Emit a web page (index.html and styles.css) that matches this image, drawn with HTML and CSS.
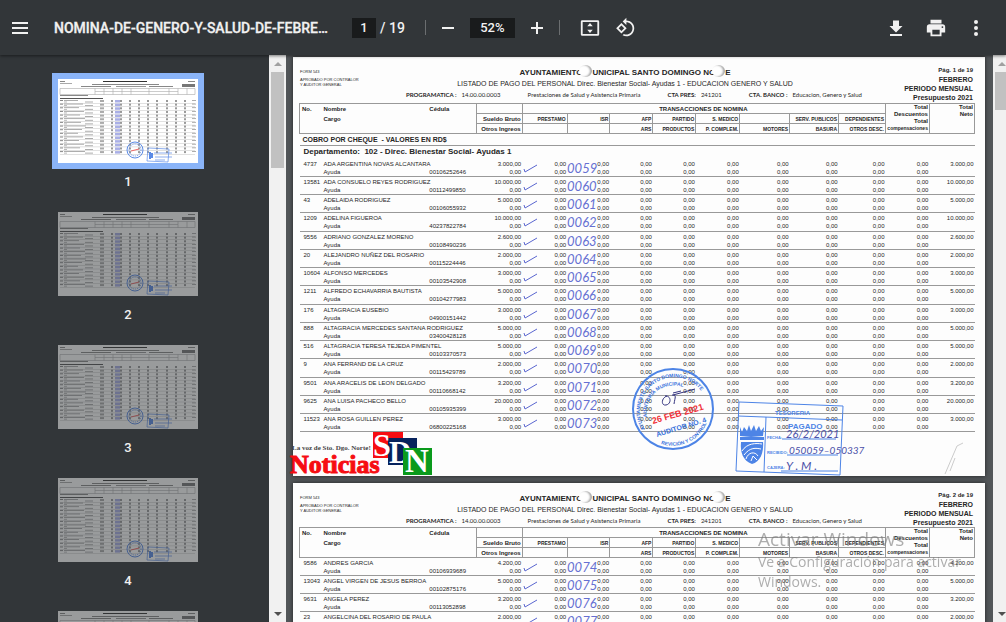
FILE: index.html
```html
<!DOCTYPE html>
<html lang="es">
<head>
<meta charset="utf-8">
<title>NOMINA-DE-GENERO-Y-SALUD-DE-FEBRERO</title>
<link rel="stylesheet" href="styles.css">
</head>
<body>
<header class="toolbar">
  <button class="icon-button" aria-label="Menú"><svg width="24" height="24" viewBox="0 0 24 24"><path d="M4 6h16v2H4zM4 11h16v2H4zM4 16h16v2H4z"/></svg></button>
  <h1 class="file-name">NOMINA-DE-GENERO-Y-SALUD-DE-FEBRE…</h1>
  <div class="page-nav">
    <input class="field page-field" aria-label="Página" value="1">
    <span>/ 19</span>
  </div>
  <span class="divider"></span>
  <button class="icon-button zoom-button" aria-label="Alejar"><svg width="24" height="24" viewBox="0 0 24 24"><path d="M6 11h12v2H6z"/></svg></button>
  <input class="field zoom-field" aria-label="Zoom" value="52%">
  <button class="icon-button zoom-button" aria-label="Acercar"><svg width="24" height="24" viewBox="0 0 24 24"><path d="M18 13h-5v5h-2v-5H6v-2h5V6h2v5h5z"/></svg></button>
  <span class="divider"></span>
  <button class="icon-button fit-button" aria-label="Ajustar a la página"><svg width="22" height="22" viewBox="0 0 24 24"><path fill-rule="evenodd" d="M3.500 3.500h17a1.500 1.500 0 0 1 1.500 1.500v14a1.500 1.500 0 0 1-1.500 1.500h-17A1.500 1.500 0 0 1 2 19V5a1.500 1.500 0 0 1 1.500-1.500zM4 5.500v13h16v-13zM12 6.500l3 3.500H9zM12 17.500l-3-3.500h6z"/></svg></button>
  <button class="icon-button" aria-label="Girar"><svg width="21" height="21" viewBox="0 0 24 24"><path fill-rule="evenodd" d="M7.340 6.900L1.340 12.900l6 6 6-6zM4.190 12.900l3.150-3.150 3.160 3.150-3.160 3.150z"/><path d="M19.360 6.640C17.610 4.880 15.300 4 13 4V.760L8.760 5 13 9.240V6c1.790 0 3.580.680 4.950 2.050 2.730 2.730 2.730 7.170 0 9.900C16.580 19.320 14.790 20 13 20c-.970 0-1.940-.210-2.840-.610l-1.490 1.490C10.020 21.620 11.510 22 13 22c2.300 0 4.610-.880 6.360-2.640 3.520-3.510 3.520-9.210 0-12.720z"/></svg></button>
  <div class="actions">
    <button class="icon-button" aria-label="Descargar"><svg width="24" height="24" viewBox="0 0 24 24"><path d="M18.500 10H15V4.500H9V10H5.500l6.500 6.500zM6 18v2h12v-2z"/></svg></button>
    <button class="icon-button" aria-label="Imprimir"><svg width="22" height="22" viewBox="0 0 24 24"><path fill-rule="evenodd" d="M19 8H5a3 3 0 0 0-3 3v6h4v4h12v-4h4v-6a3 3 0 0 0-3-3zm-3 11H8v-5h8zm3-7a1 1 0 1 1 0-2 1 1 0 0 1 0 2zM18 3H6v4h12z"/></svg></button>
    <button class="icon-button" aria-label="Más acciones"><svg width="24" height="24" viewBox="0 0 24 24"><circle cx="12" cy="6" r="2"/><circle cx="12" cy="12" r="2"/><circle cx="12" cy="18" r="2"/></svg></button>
  </div>
</header>

<main class="workspace">
  <nav class="sidebar" aria-label="Miniaturas">
    <div class="thumbs" id="thumbs"></div>
    <div class="scrollbar"><i class="arrow up"></i><div class="thumb tall"></div><i class="arrow down"></i></div>
  </nav>
  <section class="viewer">
    <div class="papers" id="papers"></div>
    <div class="scrollbar clipped"><i class="arrow up"></i><div class="thumb"></div><i class="arrow down"></i></div>
  </section>
</main>

<template id="overlays">
  <div class="logo">
    <span class="slogan">La voz de Sto. Dgo. Norte!</span>
    <span class="brand">Noticias</span>
    <svg class="squares" width="60" height="43" viewBox="0 0 60 43">
      <rect width="30" height="26" fill="#f60d12"/>
      <rect x="15" y="6" width="29" height="27" fill="#06225c"/>
      <text x="0" y="24" font-size="32">S</text><text x="16" y="31" font-size="31">D</text>
      <rect x="30" y="16" width="29" height="27" fill="#0a9a1c"/><text x="32" y="40" font-size="33">N</text>
    </svg>
  </div>
  <svg class="round-stamp" width="84" height="84" viewBox="0 0 84 84">
    <defs>
      <path id="arc-outer" d="M14 62A34 34 0 1 1 76 36"/>
      <path id="arc-inner" d="M16 50A27 27 0 0 1 66 32"/>
      <path id="arc-low" d="M30 77A37 37 0 0 0 78 48"/>
    </defs>
    <circle cx="42" cy="42" r="40" fill="none" stroke="#4d84e6" stroke-width="2"/>
    <g fill="#3872dc" font-weight="700" font-size="5">
      <text><textPath href="#arc-outer">AYUNTAMIENTO SANTO DOMINGO NORTE</textPath></text>
      <text><textPath href="#arc-inner">AUDITORÍA MUNICIPAL</textPath></text>
      <text><textPath href="#arc-low">REVICIÓN Y CONTROL</textPath></text>
      <text font-size="7" transform="rotate(-17 26 70)" x="26" y="70">AUDITOR NO. 4</text>
    </g>
    <text x="22" y="57" transform="rotate(-16 22 57)" fill="#f03238" font-size="9" font-weight="700">26 FEB 2021</text>
    <path d="M36 29c-6 2-6 10-1 9 6-1 5-10-1-9M41 28c5 0 3 2 2 9M42 28l22-6M42 26l8-2" fill="none" stroke="#33337f"/>
  </svg>
  <svg class="square-stamp" width="132" height="78" viewBox="0 0 132 78">
    <g fill="none" stroke="#4d84e6">
      <path d="M5 2l104 4-3 69-104-4zM4 16l104 4M32 17l-2 55M48 39h54M53 55h51M47 71h57"/>
    </g>
    <g fill="#4d84e6">
      <path d="M6 27l2 5 2-5 3 4 2-6 2 6 3-6 2 6 3-5 2 5 3-4-1 9-12 1-11-1z"/>
      <path d="M6 37h24v3H6zM7 42h22c1 11-3 20-11 22C9 61 6 52 7 42z"/>
      <g font-weight="700"><text x="41" y="15" font-size="6">TESORERIA</text><text x="54" y="29" font-size="8">PAGADO</text>
      <text x="33" y="39" font-size="4">FECHA:</text><text x="33" y="54" font-size="4">RECIBIDO:</text><text x="33" y="69" font-size="4">CAJERA:</text></g>
    </g>
    <path d="M8 51c5-8 14-8 20-7M10 55c6-8 12-7 17-6M12 59c2-7 9-8 12-3M17 61l2-5 4 4" fill="none" stroke="#fff"/>
    <g class="pen"><text x="52" y="38" font-size="11">26/2/2021</text><text x="55" y="54" font-size="10">050059–050337</text><text x="52" y="70" font-size="12">Y . M .</text></g>
  </svg>
  <svg class="crease" width="32" height="34" viewBox="0 0 32 34"><path d="M2 32L14 4l6-3M7 29l5-13" fill="none" stroke="#ccc"/></svg>
</template>

<aside class="watermark"><p class="watermark-title">Activar Windows</p><p>Ve a Configuración para activar</p><p>Windows.</p></aside>
<script src="main.js"></script>
</body>
</html>
```
FILE: styles.css
```css
* { box-sizing: border-box; }
body {
  margin: 0; height: 100vh; overflow: hidden; display: flex; flex-direction: column;
  background: #525659; font-family: "Liberation Sans", Arial, sans-serif;
}
.toolbar {
  flex: none; height: 55px; display: flex; align-items: center; padding: 0 14px 0 4px;
  background: #323639; color: #f1f1f1; font: 500 14px Roboto, sans-serif;
  box-shadow: 0 1px 3px rgba(0, 0, 0, .5); position: relative; z-index: 2;
}
.icon-button {
  width: 32px; height: 32px; padding: 0; border: 0; background: none;
  display: grid; place-items: center; fill: #f1f1f1;
}
.file-name { margin: 0 26px 0 18px; width: 272px; font: 500 14px Roboto, sans-serif; white-space: nowrap; -webkit-text-stroke: .3px #f1f1f1; }
.page-nav { display: flex; align-items: center; gap: 4px; }
.field {
  height: 20px; padding: 0; border: 0; background: #191b1c; color: #f1f1f1;
  font: 500 13px Roboto, sans-serif; text-align: center;
}
.page-field { width: 24px; }
.zoom-field { width: 45px; margin: 0 6px; }
.divider { width: 1px; height: 15px; margin: 0 6px 0 20px; background: #6b6e70; }
.zoom-button + .divider { margin: 0 14px 0 6px; }
.fit-button { margin-right: 4px; }
.actions { margin-left: auto; display: flex; gap: 8px; }

.workspace { flex: 1; min-height: 0; display: flex; }
.sidebar { width: 286px; display: flex; background: #323639; overflow: hidden; }
.thumbs { flex: 1; display: flex; flex-direction: column; align-items: center; gap: 15px; padding: 18px 13px 0 0; }
.thumb-item {
  flex: none; padding: 0; border: 0; background: none; color: #f1f1f1;
  font: 500 13px/19px Roboto, sans-serif; display: grid; justify-items: center; gap: 3px;
}
.thumb-page { display: block; border: 6px solid transparent; box-sizing: content-box; }
.thumb-page svg { display: block; background: #fff; opacity: .5; }
.current .thumb-page { border-color: #8ab4f8; }
.current svg { opacity: 1; }
.scrollbar { width: 17px; padding-bottom: 2px; display: flex; flex-direction: column; align-items: center; background: #f1f1f1; }
.arrow { border: 4px solid transparent; }
.up { margin: 3px 0 6px; border-bottom-color: #a0a0a0; }
.down { margin-top: auto; border-top-color: #505050; }
.thumb { width: 13px; height: 38px; background: #c1c1c1; }
.tall { height: 96px; }
.clipped { width: 13px; align-items: flex-end; padding-right: 0; }
.clipped .thumb { width: 11px; }

.viewer { flex: 1; min-width: 0; display: flex; overflow: hidden; }
.papers { flex: 1; padding: 2px 8px 0 7px; display: flex; flex-direction: column; gap: 7px; }
.paper {
  position: relative; flex: none; padding: 8px 10px 44px 6px; background: #fdfdfd; color: #262626;
  box-shadow: 0 0 4px rgba(0, 0, 0, .6);
}
.paper-head { height: 38px; display: grid; grid-template-columns: 76px 1fr 100px; }
.second .paper-head { height: 36px; }
.form-no { font-size: 4px; line-height: 5px; padding: 4px 0 0 1px; white-space: nowrap; }
.form-no p { margin: 0 0 3px; }
.heading { text-align: center; white-space: nowrap; }
.heading h2 { margin: 0; font-size: 8px; line-height: 15px; display: flex; justify-content: center; }
.heading p { margin: 0; font-size: 7px; line-height: 8px; }
.hole {
  width: 13px; height: 12px; margin: 0 0 0 -3px; border-radius: 50%;
  background: #fff; box-shadow: inset -2px 0 2px #aaa;
}
.heading .program {
  display: flex; margin-top: 1px; padding-left: 31px; font: 6px/12px Lato, sans-serif;
}
.program b { margin-right: 5px; }
.program span { margin-right: auto; }
.program span:last-child { margin-right: 13px; }
.period { text-align: right; font-weight: 700; font-size: 7px; line-height: 9px; padding: 1px 2px 0 0; white-space: nowrap; }
.second .period { padding-top: 0; }
.period p { margin: 0; }
.period .folio { font-size: 6px; }

.payroll { width: 100%; table-layout: fixed; border-collapse: collapse; font-size: 6px; line-height: 8px; }
.payroll td, .payroll th { padding: 1px 1px 0 0; vertical-align: top; text-align: right; white-space: nowrap; }
.payroll thead th { height: 10px; border: 1px solid #999; font-size: 5px; }
.payroll thead .mixed { font-size: 6px; }
.payroll thead .group { text-align: center; font-size: 6px; border-right: 0; }
.payroll thead .open { border-left: 0; border-right: 0; text-align: left; padding: 0 0 0 1px; line-height: 10px; font-size: 6px; }
.payroll thead .first { border-left: 1px solid #999; padding-left: 2px; }
.payroll thead .totals { font-size: 6px; line-height: 7px; padding-top: 0; }
.totals small { font-size: 5px; }
.payroll .method th { height: 12px; text-align: left; font-size: 7px; padding: 2px 0 0 3px; border-bottom: 1px solid #999; }
.payroll .department th { height: 13px; text-align: left; font-size: 8px; padding: 2px 0 0 4px; }
.person { height: 18px; border-bottom: 1px solid #999; }
.person:nth-child(4n) { height: 19px; }
.payroll .person .left { text-align: left; padding-left: 1px; }
.payroll .person .number { text-align: left; padding-left: 4px; }
.full-name { white-space: pre; }
.payroll .marked { position: relative; }
.tick { position: absolute; left: 1px; top: 4px; }
.pen { font-family: Lato, sans-serif; font-weight: 400; font-style: italic; fill: #4a50a8; color: #6670d2; }
.serial { position: absolute; left: 0; top: 2px; font-size: 13px; line-height: 14px; }

.logo { position: absolute; left: -3px; bottom: 1px; width: 144px; height: 43px; font-family: "Liberation Serif", serif; font-weight: 700; display: flex; flex-direction: column; justify-content: flex-end; white-space: nowrap; }
.slogan { font-size: 7px; line-height: 8px; color: #444; padding: 0 0 3px 2px; }
.brand { font-size: 26px; line-height: 20px; color: #f60d12; -webkit-text-stroke: 1px #f60d12; }
.squares { position: absolute; right: 1px; bottom: 0; fill: #fff; }
.round-stamp { position: absolute; left: 338px; top: 310px; }
.square-stamp { position: absolute; left: 441px; top: 343px; overflow: visible; }
.crease { position: absolute; right: 10px; bottom: 0; }
.watermark { position: fixed; left: 758px; top: 527px; z-index: 3; color: rgba(120, 120, 120, .6); font: 14px/20px "Open Sans", sans-serif; white-space: nowrap; pointer-events: none; }
.watermark p { margin: 0; }
.watermark .watermark-title { font-size: 19px; line-height: 25px; }
```
FILE: main.js
```js
const firstPage = [
  ['4737', 'ADA ARGENTINA NOVAS ALCANTARA', '00106252646', '3.000,00', '0059'],
  ['13581', 'ADA CONSUELO REYES RODRIGUEZ', '00112499850', '10.000,00', '0060'],
  ['43', 'ADELAIDA RODRIGUEZ', '00106055932', '5.000,00', '0061'],
  ['1209', 'ADELINA FIGUEROA', '40237822784', '10.000,00', '0062'],
  ['9556', 'ADRIANO GONZALEZ MORENO', '00108490236', '2.600,00', '0063'],
  ['20', 'ALEJANDRO NUÑEZ DEL ROSARIO', '00115224446', '2.000,00', '0064'],
  ['10604', 'ALFONSO MERCEDES', '00103542908', '3.000,00', '0065'],
  ['1211', 'ALFREDO ECHAVARRIA BAUTISTA', '00104277983', '5.000,00', '0066'],
  ['176', 'ALTAGRACIA EUSEBIO', '04900151442', '3.000,00', '0067'],
  ['888', 'ALTAGRACIA MERCEDES SANTANA RODRIGUEZ', '03400428128', '5.000,00', '0068'],
  ['516', 'ALTAGRACIA TERESA TEJEDA PIMENTEL', '00103370573', '5.000,00', '0069'],
  ['9', 'ANA FERRAND DE LA CRUZ', '00115429789', '2.000,00', '0070'],
  ['9501', 'ANA ARACELIS DE LEON DELGADO', '00110668142', '3.200,00', '0071'],
  ['9625', 'ANA LUISA PACHECO BELLO', '00105935399', '20.000,00', '0072'],
  ['11523', 'ANA ROSA GUILLEN PEREZ', '06800225168', '3.000,00', '0073'],
];
const secondPage = [
  ['9586', 'ANDRES GARCIA', '00106939689', '4.200,00', '0074'],
  ['13043', 'ANGEL VIRGEN DE JESUS BERROA', '00102875176', '5.000,00', '0075'],
  ['9631', 'ANGELA PEREZ', '00113052898', '3.200,00', '0076'],
  ['23', 'ANGELCINA DEL ROSARIO DE PAULA', '', '2.000,00', '0077'],
];
const columns = [23, 106, 48, 46, 45, 43, 43, 43, 44, 50, 49, 47, 44, 45];
const columnTotal = columns.reduce((a, b) => a + b);

const tick = '<svg class="tick" width="15" height="10" viewBox="0 0 15 10"><path d="M1 6l1 3 12-7" fill="none" stroke="#5a66d0"/></svg>';
const zeros = '<td>0,00<br>0,00</td>';

function personRow([number, name, id, amount, serial]) {
  return `<tr class="person"><td class="number">${number}</td>
    <td class="left"><span class="full-name">${name}</span><br>Ayuda</td>
    <td class="left"><br>${id}</td><td>${amount}<br>0,00</td>
    <td class="marked">${tick}0,00<br>0,00</td>
    <td class="marked"><span class="serial pen">${serial}</span>0,00<br>0,00</td>
    ${zeros.repeat(7)}<td>${amount}</td></tr>`;
}

function paper(page, people, intro) {
  const cols = columns.map(w => `<col style="width:${w / columnTotal * 100}%">`).join('');
  return `<article class="paper ${page === 2 ? 'second' : ''}">
  <div class="paper-head">
    <div class="form-no"><p>FORM 543</p><p>APROBADO POR CONTRALOR<br>Y AUDITOR GENERAL</p></div>
    <div class="heading">
      <h2>AYUNTAMIENTO<i class="hole"></i>UNICIPAL SANTO DOMINGO NO<i class="hole"></i>E</h2>
      <p>LISTADO DE PAGO DEL PERSONAL Direc. Bienestar Social- Ayudas 1 - EDUCACION GENERO Y SALUD</p>
      <p class="program"><b>PROGRAMATICA :</b><span>14.00.00.0003</span><span>Prestaciones de Salud y Asistencia Primaria</span><b>CTA PRES:</b><span>241201</span><b>CTA. BANCO :</b><span>Educacion, Genero y Salud</span></p>
    </div>
    <div class="period"><p class="folio">Pág. ${page} de 19</p><p>FEBRERO</p><p>PERIODO MENSUAL</p><p>Presupuesto 2021</p></div>
  </div>
  <table class="payroll"><colgroup>${cols}</colgroup>
  <thead>
    <tr><th rowspan="3" class="open first">No.</th><th rowspan="3" class="open">Nombre<br>Cargo</th><th rowspan="3" class="open">Cédula</th>
      <th></th><th colspan="8" class="group">TRANSACCIONES DE NOMINA</th>
      <th rowspan="3" class="totals">Total<br>Descuentos<br>Total<br><small>compensaciones</small></th><th rowspan="3" class="totals">Total<br>Neto</th></tr>
    <tr><th class="mixed">Sueldo Bruto</th><th>PRESTAMO</th><th>ISR</th><th>AFP</th><th>PARTIDO</th><th>S. MEDICO</th><th></th><th>SERV. PUBLICOS</th><th>DEPENDIENTES</th></tr>
    <tr><th class="mixed">Otros Ingreos</th><th></th><th></th><th>ARS</th><th>PRODUCTOS</th><th>P. COMPLEM.</th><th>MOTORES</th><th>BASURA</th><th>OTROS DESC.</th></tr>
  </thead>
  ${intro}
  <tbody>${people.map(personRow).join('')}</tbody></table></article>`;
}

const introRows = `<tbody><tr class="method"><th colspan="14">COBRO POR CHEQUE&nbsp; - VALORES EN RD$</th></tr>
  <tr class="department"><th colspan="14">Departamento:&nbsp; 102 - Direc. Bienestar Social- Ayudas 1</th></tr></tbody>`;
const papers = document.getElementById('papers');
papers.innerHTML = paper(1, firstPage, introRows) + paper(2, secondPage, '');
papers.firstElementChild.append(document.getElementById('overlays').content);

function miniature() {
  const parts = [];
  const dash = (x, y, w, h = 1, color = '#888') => parts.push(`<rect x="${x}" y="${y}" width="${w}" height="${h}" fill="${color}"/>`);
  dash(2, 2, 5); dash(2, 4, 12, 1, '#aaa'); dash(45, 2, 44, 1, '#333'); dash(34, 5, 67, 1, '#888');
  dash(23, 7, 30); dash(58, 7, 30, 1, '#999'); dash(91, 7, 24, 1, '#888'); dash(130, 2, 7); dash(124, 5, 13, 3, '#777');
  parts.push('<path d="M2 9.500h135v6H2zM37 9.500v6M46 9.500v6M55 9.500v6M64 9.500v6M73 9.500v6M91 9.500v6M111 9.500v6M120 9.500v6M129 9.500v6M37 12.500h83" fill="none" stroke="#aaa" stroke-width=".6"/>');
  dash(2, 16, 28); dash(2, 19, 43, 1, '#555');
  for (let i = 0; i < 15; i++) {
    const y = 21 + i * 3.65;
    dash(2, y, 3); dash(6, y, 14 + i * 5 % 9, .8, '#999'); dash(6, y + 1.6, 3, .8, '#aaa'); dash(27, y + 1.6, 8, .8, '#999');
    dash(2, y + 3, 135, .3, '#999'); dash(42, y, 4, 2, '#aaa'); dash(134, y, 4, .8, '#999'); dash(57, y, 5, 2.5, '#a9afe6');
    for (const x of [53, 62, 71, 80, 89, 98, 108, 117, 126]) dash(x, y, 2, 2, '#999');
  }
  parts.push('<g fill="none" stroke="#5b8be6"><circle cx="77" cy="71" r="8"/><circle cx="77" cy="71" r="6" stroke-dasharray="1 1"/><path d="M90 69l21 1-1 13-21-1zM96 74h18M97 78h17M97 81h10" stroke-width=".7"/><path d="M92 73v7M94 74v5" stroke-width="2"/><path d="M73 72l8-2" stroke="#e66" stroke-width="1"/></g>');
  return `<svg width="140" height="84" viewBox="0 0 140 84">${parts.join('')}</svg>`;
}
document.getElementById('thumbs').innerHTML = [1, 2, 3, 4, 5].map(n =>
  `<button class="thumb-item ${n === 1 ? 'current' : ''}"><span class="thumb-page">${miniature()}</span>${n}</button>`).join('');
```
